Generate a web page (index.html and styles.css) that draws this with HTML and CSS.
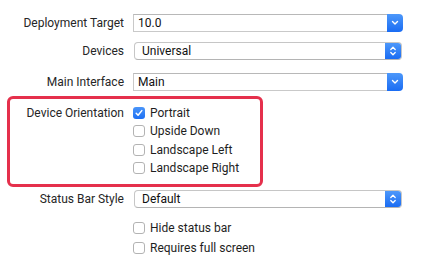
FILE: index.html
```html
<!DOCTYPE html>
<html lang="en">
<head>
    <meta charset="UTF-8">
    <title>Deployment Info</title>
    <link rel="stylesheet" href="styles.css">
</head>
<body>
    <div class="panel">
        <div class="row row-target">
            <label class="label">Deployment Target</label>
            <div class="combo">
                <span class="combo-text">10.0</span>
                <span class="combo-btn">
                    <svg width="8" height="6" viewBox="0 0 8 6"><path d="M1.5 1.5 L4 4 L6.5 1.5" fill="none" stroke="#fff" stroke-width="1.4" stroke-linecap="round" stroke-linejoin="round"/></svg>
                </span>
            </div>
        </div>

        <div class="row row-devices">
            <label class="label">Devices</label>
            <div class="popup">
                <span class="popup-text">Universal</span>
                <span class="popup-btn">
                    <svg width="8" height="12" viewBox="0 0 8 12"><path d="M1.8 4.5 L4 2.3 L6.2 4.5 M1.8 7.5 L4 9.7 L6.2 7.5" fill="none" stroke="#fff" stroke-width="1.3" stroke-linecap="round" stroke-linejoin="round"/></svg>
                </span>
            </div>
        </div>

        <div class="row row-main">
            <label class="label">Main Interface</label>
            <div class="combo">
                <span class="combo-text">Main</span>
                <span class="combo-btn">
                    <svg width="8" height="6" viewBox="0 0 8 6"><path d="M1.5 1.5 L4 4 L6.5 1.5" fill="none" stroke="#fff" stroke-width="1.4" stroke-linecap="round" stroke-linejoin="round"/></svg>
                </span>
            </div>
        </div>

        <div class="orientation">
            <div class="row row-orient">
                <label class="label">Device Orientation</label>
                <div class="checks">
                    <div class="check"><span class="box checked"><svg width="12" height="12" viewBox="0 0 12 12"><path d="M3.2 6.2 L5.1 8.2 L8.8 3.6" fill="none" stroke="#fff" stroke-width="1.5" stroke-linecap="round" stroke-linejoin="round"/></svg></span>Portrait</div>
                    <div class="check"><span class="box"></span>Upside Down</div>
                    <div class="check"><span class="box"></span>Landscape Left</div>
                    <div class="check"><span class="box"></span>Landscape Right</div>
                </div>
            </div>
        </div>

        <div class="row row-status">
            <label class="label">Status Bar Style</label>
            <div class="popup">
                <span class="popup-text">Default</span>
                <span class="popup-btn">
                    <svg width="8" height="12" viewBox="0 0 8 12"><path d="M1.8 4.5 L4 2.3 L6.2 4.5 M1.8 7.5 L4 9.7 L6.2 7.5" fill="none" stroke="#fff" stroke-width="1.3" stroke-linecap="round" stroke-linejoin="round"/></svg>
                </span>
            </div>
        </div>

        <div class="row row-extra">
            <span class="label"></span>
            <div class="checks">
                <div class="check"><span class="box"></span>Hide status bar</div>
                <div class="check check-far"><span class="box"></span>Requires full screen</div>
            </div>
        </div>
    </div>
</body>
</html>
```

FILE: styles.css
```css
body {
    margin: 0;
    background-color: #fff;
    font-family: Roboto, "Liberation Sans", sans-serif;
    font-size: 12px;
    color: #1e1e1e;
}

.panel {
    padding-top: 14px;
}

.row {
    display: grid;
    grid-template-columns: 124px 270px;
    column-gap: 9px;
    align-items: center;
}

.label {
    text-align: right;
    color: #262626;
}

.row-devices {
    margin-top: 10px;
}

.row-main {
    margin-top: 13px;
}

/* combo box: square field with blue button */
.combo {
    display: flex;
    height: 18px;
    box-sizing: border-box;
}

.combo-text {
    flex: 1;
    border: 1px solid #c9c9c9;
    border-top-color: #b8b8b8;
    border-right: none;
    padding-left: 4px;
    line-height: 16px;
    color: #111;
}

.combo-btn {
    width: 16px;
    display: flex;
    align-items: center;
    justify-content: center;
    background: linear-gradient(#4d98fa, #1a6cf3);
    border-radius: 0 4px 4px 0;
}

/* popup button: rounded all round */
.popup {
    display: flex;
    height: 18px;
    margin-left: 1px;
    margin-right: 1px;
    border: 1px solid #c6c6c6;
    border-bottom-color: #b4b4b4;
    border-radius: 4px;
    box-sizing: border-box;
    overflow: hidden;
}

.popup-text {
    flex: 1;
    padding-left: 7px;
    line-height: 16px;
    color: #111;
}

.popup-btn {
    width: 16px;
    display: flex;
    align-items: center;
    justify-content: center;
    background: linear-gradient(#4d98fa, #1a6cf3);
}

/* highlighted section */
.orientation {
    margin-top: 5px;
    margin-left: 7px;
    width: 256px;
    height: 91px;
    box-sizing: border-box;
    border: 3px solid #e5304c;
    border-radius: 6px;
    padding-top: 6px;
}

.row-orient {
    grid-template-columns: 114px 130px;
    align-items: start;
}

.row-orient .label {
    line-height: 16px;
}

.checks {
    display: flex;
    flex-direction: column;
    row-gap: 2.3px;
}

.check {
    display: flex;
    align-items: center;
    height: 16px;
    color: #1e1e1e;
}

.box {
    width: 12px;
    height: 12px;
    box-sizing: border-box;
    border: 1px solid #b3b3b3;
    border-radius: 3px;
    background-color: #fff;
    margin-right: 5px;
    display: flex;
}

.box.checked {
    border: none;
    background: linear-gradient(#4a95f9, #1d6ff3);
}

.row-status {
    margin-top: 3px;
}

.row-extra {
    margin-top: 12px;
}

.check-far {
    margin-top: 2px;
}
```
